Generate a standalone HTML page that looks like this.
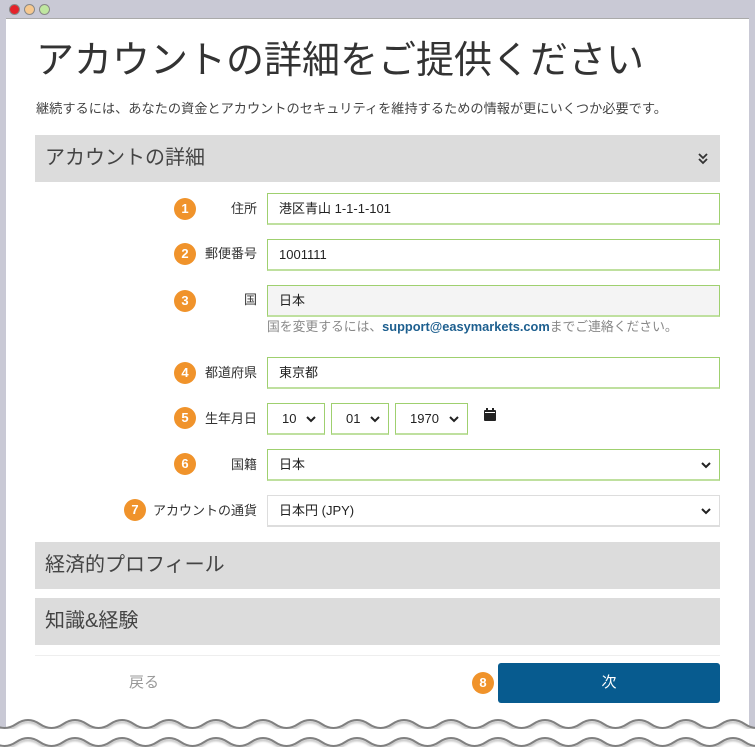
<!DOCTYPE html>
<html><head><meta charset="utf-8"><style>
*{box-sizing:border-box;margin:0;padding:0}
body{width:755px;height:753px;background:#fff;position:relative;overflow:hidden;font-family:"Liberation Sans","Noto Sans CJK JP",sans-serif;color:#333}
.frame{position:absolute;left:0;top:0;width:755px;height:735px;background:#c9c9d5}
.inner{position:absolute;left:6px;top:18px;width:743px;height:717px;background:#fff;border-top:1px solid #aaa}
.dot{position:absolute;top:4px;width:11px;height:11px;border-radius:50%;border:1px solid #888}
.a{position:absolute}
h1{position:absolute;left:36px;top:39px;font-size:38px;line-height:44px;font-weight:400;color:#333;white-space:nowrap}
.sub{left:36px;top:101px;font-size:13.2px;line-height:16px;color:#444;white-space:nowrap}
.sec{position:absolute;left:35px;width:685px;height:47px;background:#dcdcdc;font-size:20px;line-height:47px;color:#444;padding-left:10px}
.inp{position:absolute;left:267px;width:453px;height:32px;border:1px solid #9fd06f;border-bottom:2px solid #bfe09f;font-size:13px;line-height:29px;padding-left:11px;color:#222}
.lbl{position:absolute;right:498px;font-size:13px;line-height:16px;color:#333;white-space:nowrap}
.b{position:absolute;width:22px;height:22px;border-radius:50%;background:#f0932b;color:#fff;font-weight:bold;font-size:13px;text-align:center;line-height:22px}
.chev{position:absolute;right:8px;top:11px}
</style></head><body>
<div class="frame"></div>
<div class="dot" style="left:9px;background:#e4222a"></div>
<div class="dot" style="left:24px;background:#f6c88f"></div>
<div class="dot" style="left:39px;background:#bfe6a0"></div>
<div class="inner"></div>
<h1>アカウントの詳細をご提供ください</h1>
<div class="a sub">継続するには、あなたの資金とアカウントのセキュリティを維持するための情報が更にいくつか必要です。</div>
<div class="sec" style="top:135px">アカウントの詳細
<svg class="a" style="left:662px;top:18px" width="12" height="12" viewBox="0 0 12 12"><path d="M2 1l4 4 4-4M2 6l4 4 4-4" stroke="#333" stroke-width="1.8" fill="none"/></svg></div>

<div class="b" style="left:174px;top:198px">1</div><div class="lbl" style="top:201px">住所</div>
<div class="inp" style="top:193px">港区青山 1-1-1-101</div>
<div class="b" style="left:174px;top:243px">2</div><div class="lbl" style="top:246px">郵便番号</div>
<div class="inp" style="top:239px">1001111</div>
<div class="b" style="left:174px;top:290px">3</div><div class="lbl" style="top:292px">国</div>
<div class="inp" style="top:285px;background:#f4f4f4">日本</div>
<div class="a" style="left:267px;top:319px;font-size:12.8px;line-height:16px;color:#888;white-space:nowrap">国を変更するには、<span style="color:#1d5f8f;font-weight:bold">support@easymarkets.com</span>までご連絡ください。</div>
<div class="b" style="left:174px;top:362px">4</div><div class="lbl" style="top:365px">都道府県</div>
<div class="inp" style="top:357px">東京都</div>
<div class="b" style="left:174px;top:407px">5</div><div class="lbl" style="top:411px">生年月日</div>
<div class="inp" style="top:403px;width:58px;padding-left:14px">10<svg class="chev" width="10" height="8"><path d="M1 2l4 4 4-4" stroke="#222" stroke-width="2" fill="none"/></svg></div>
<div class="inp" style="top:403px;left:331px;width:58px;padding-left:14px">01<svg class="chev" width="10" height="8"><path d="M1 2l4 4 4-4" stroke="#222" stroke-width="2" fill="none"/></svg></div>
<div class="inp" style="top:403px;left:395px;width:73px;padding-left:14px">1970<svg class="chev" width="10" height="8"><path d="M1 2l4 4 4-4" stroke="#222" stroke-width="2" fill="none"/></svg></div>
<svg class="a" style="left:484px;top:408px" width="12" height="13" viewBox="0 0 12 13"><rect x="0" y="2" width="12" height="11" rx="1" fill="#222"/><rect x="2" y="0" width="2" height="3" fill="#222"/><rect x="8" y="0" width="2" height="3" fill="#222"/><rect x="1" y="4" width="10" height="1" fill="#fff"/></svg>
<div class="b" style="left:174px;top:453px">6</div><div class="lbl" style="top:457px">国籍</div>
<div class="inp" style="top:449px">日本<svg class="chev" width="10" height="8"><path d="M1 2l4 4 4-4" stroke="#222" stroke-width="2" fill="none"/></svg></div>
<div class="b" style="left:124px;top:499px">7</div><div class="lbl" style="top:503px">アカウントの通貨</div>
<div class="inp" style="top:495px;border-color:#ddd">日本円 (JPY)<svg class="chev" width="10" height="8"><path d="M1 2l4 4 4-4" stroke="#222" stroke-width="2" fill="none"/></svg></div>

<div class="sec" style="top:542px">経済的プロフィール</div>
<div class="sec" style="top:598px">知識&amp;経験</div>
<div class="a" style="left:35px;top:655px;width:685px;height:1px;background:#eee"></div>
<div class="a" style="left:129px;top:674px;font-size:15px;line-height:18px;color:#999">戻る</div>
<div class="b" style="left:472px;top:672px">8</div>
<div class="a" style="left:498px;top:663px;width:222px;height:40px;background:#075b8f;border-radius:3px;color:#fff;font-size:15px;text-align:center;line-height:40px">次</div>
<svg class="a" style="left:0;top:705px" width="755" height="48" viewBox="0 0 755 48">
<defs><filter id="s"><feDropShadow dx="0" dy="2" stdDeviation="1" flood-color="#000" flood-opacity="0.3"/></filter></defs>
<path d="M-30.75 19 Q-19 11 -7.25 19 T16.25 19 T39.75 19 T63.25 19 T86.75 19 T110.25 19 T133.75 19 T157.25 19 T180.75 19 T204.25 19 T227.75 19 T251.25 19 T274.75 19 T298.25 19 T321.75 19 T345.25 19 T368.75 19 T392.25 19 T415.75 19 T439.25 19 T462.75 19 T486.25 19 T509.75 19 T533.25 19 T556.75 19 T580.25 19 T603.75 19 T627.25 19 T650.75 19 T674.25 19 T697.75 19 T721.25 19 T744.75 19 T768.25 19 T791.75 19 L791 48 L-31 48Z" fill="#fff"/>
<path d="M-30.75 19 Q-19 11 -7.25 19 T16.25 19 T39.75 19 T63.25 19 T86.75 19 T110.25 19 T133.75 19 T157.25 19 T180.75 19 T204.25 19 T227.75 19 T251.25 19 T274.75 19 T298.25 19 T321.75 19 T345.25 19 T368.75 19 T392.25 19 T415.75 19 T439.25 19 T462.75 19 T486.25 19 T509.75 19 T533.25 19 T556.75 19 T580.25 19 T603.75 19 T627.25 19 T650.75 19 T674.25 19 T697.75 19 T721.25 19 T744.75 19 T768.25 19 T791.75 19" stroke="#808080" stroke-width="2" fill="none" filter="url(#s)"/>
<path d="M-30.75 37 Q-19 29 -7.25 37 T16.25 37 T39.75 37 T63.25 37 T86.75 37 T110.25 37 T133.75 37 T157.25 37 T180.75 37 T204.25 37 T227.75 37 T251.25 37 T274.75 37 T298.25 37 T321.75 37 T345.25 37 T368.75 37 T392.25 37 T415.75 37 T439.25 37 T462.75 37 T486.25 37 T509.75 37 T533.25 37 T556.75 37 T580.25 37 T603.75 37 T627.25 37 T650.75 37 T674.25 37 T697.75 37 T721.25 37 T744.75 37 T768.25 37 T791.75 37" stroke="#808080" stroke-width="2" fill="none" filter="url(#s)"/>
</svg>
</body></html>
